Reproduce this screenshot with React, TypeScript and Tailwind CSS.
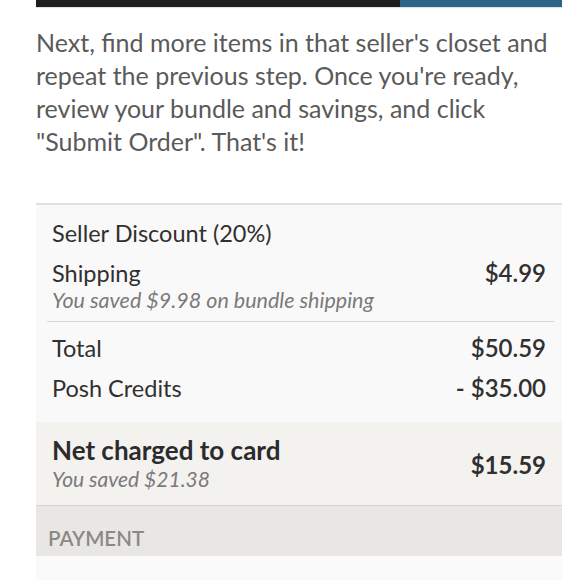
import React from "react";

const rowText = "text-[23.5px] leading-[28px] text-[#303030]";
const valueText = "text-[24px] leading-[28px] font-semibold text-[#303030]";

export default function App() {
    return (
        <div className="w-[580px] h-[580px] bg-white overflow-hidden" style={{ fontFamily: "Lato, 'Open Sans', sans-serif" }}>
            <div className="ml-[36px] mr-[18px]">
                {/* progress bar */}
                <div className="flex h-[7px] shadow-[0_1px_1px_rgba(0,0,0,0.12)]">
                    <div className="w-[364px] bg-[#1d1d1d]"></div>
                    <div className="flex-1 bg-[#2a6489]"></div>
                </div>

                <p className="mt-[19px] text-[25px] leading-[33px] text-[#5a5a5a]">
                    Next, find more items in that seller's closet and repeat the previous step. Once you're ready,
                    review your bundle and savings, and click "Submit Order". That's it!
                </p>

                {/* summary card */}
                <div className="mt-[45px] border-t-2 border-[#e2e1e1] bg-[#faf9f9]">
                    <div className="px-4 pt-[14px] pb-[8px]">
                        <div className={rowText}>Seller Discount (20%)</div>
                        <div className="mt-[12px] flex justify-between">
                            <div>
                                <div className={rowText}>Shipping</div>
                                <div className="text-[21.5px] leading-[26px] italic text-[#7a7a7a]">
                                    You saved $9.98 on bundle shipping
                                </div>
                            </div>
                            <div className={valueText}>$4.99</div>
                        </div>
                    </div>
                    <div className="ml-[11px] mr-[8px] h-px bg-[#d9d8d8]"></div>
                    <div className="px-4 pt-[12px] pb-[20px] flex flex-col gap-[12px]">
                        <div className="flex justify-between">
                            <span className={rowText}>Total</span>
                            <span className={valueText}>$50.59</span>
                        </div>
                        <div className="flex justify-between">
                            <span className={rowText}>Posh Credits</span>
                            <span className={valueText}>- $35.00</span>
                        </div>
                    </div>

                    {/* net charged */}
                    <div className="bg-[#f4f2ef] px-4 pt-[13px] pb-[13px] flex justify-between items-center border-b border-[#d6d4d0]">
                        <div>
                            <div className="text-[26px] leading-[30px] font-bold text-[#2b2b2b]">Net charged to card</div>
                            <div className="mt-[1px] text-[21px] leading-[26px] italic text-[#7a7a7a]">You saved $21.38</div>
                        </div>
                        <div className="text-[24px] leading-[28px] font-bold text-[#303030] mt-[3px]">$15.59</div>
                    </div>

                    <div className="h-[50px] bg-[#e9e7e4] pl-[12px] pt-[20px]">
                        <div className="text-[20.5px] leading-[24px] font-semibold uppercase text-[#8b8987]">Payment</div>
                    </div>
                    <div className="h-[30px] bg-[#fbfafa]"></div>
                </div>
            </div>
        </div>
    );
}
